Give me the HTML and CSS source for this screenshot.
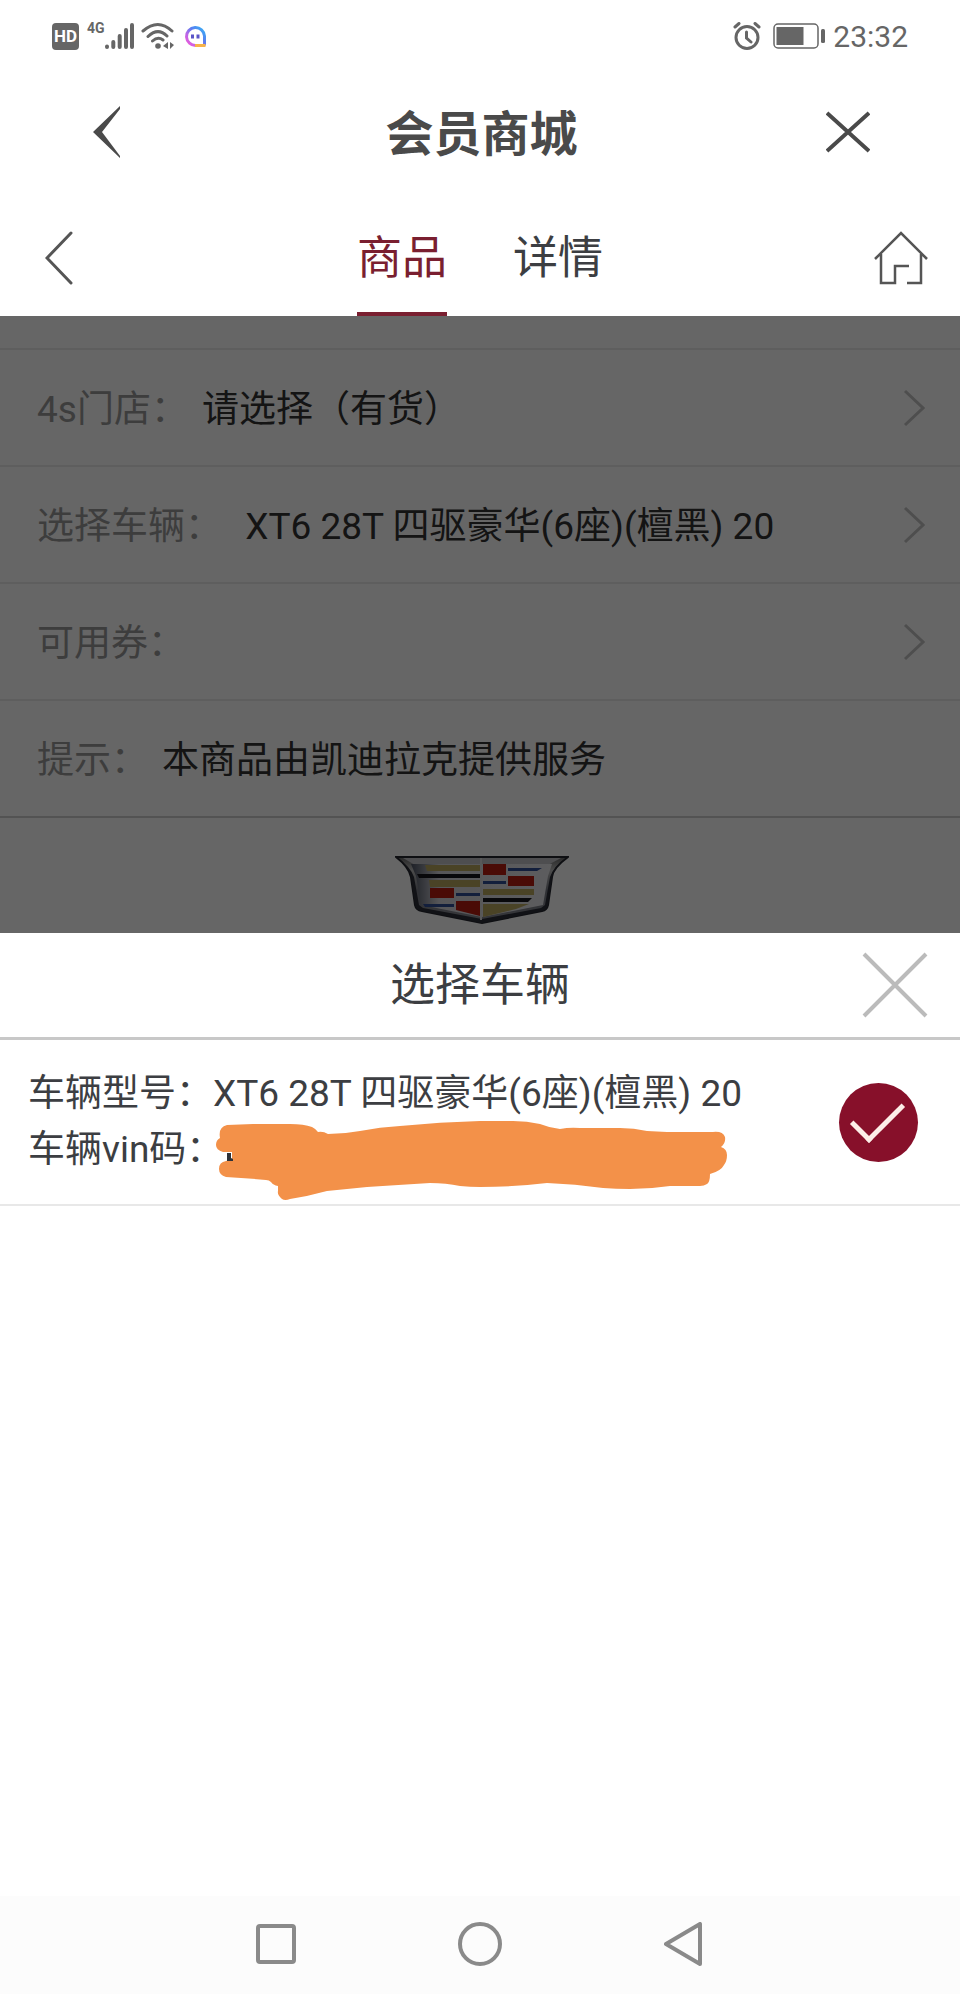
FILE: index.html
```html
<!DOCTYPE html>
<html lang="zh-CN">
<head>
  <meta charset="UTF-8">
  <meta name="viewport" content="width=device-width, initial-scale=1.0">
  <title>会员商城</title>
  <link rel="stylesheet" href="styles.css">
</head>
<body>
  <div class="status-bar">
    <div class="status-left">
      <span class="hd">HD</span>
      <span class="network">4G</span>
      <svg class="signal" width="30" height="28" viewBox="0 0 30 28" stroke="#666" stroke-width="4" stroke-linecap="round">
        <path d="M2 24.500v.5M8.300 20v5M14.700 14v11M21 8v17M27 3v22"/>
      </svg>
      <svg class="wifi" width="34" height="28" viewBox="0 0 34 28" fill="none" stroke="#666" stroke-width="3" stroke-linecap="round">
        <path d="M2 9Q17-4 31 9M7 14.500Q17 5 26 14M11.500 19Q17 14 22 18"/>
        <circle cx="17" cy="24" r="2.800" fill="#666" stroke="none"/>
        <path d="M27 20v7l-5-3zM29 20v7l4-4z" fill="#666" stroke="none"/>
      </svg>
      <svg class="chat" width="23" height="23" viewBox="0 0 23 23" fill="none">
        <defs>
          <linearGradient id="bubble" x1="0" y1="1" x2="1" y2="0">
            <stop offset="0" stop-color="#f457d8"/>
            <stop offset=".35" stop-color="#b667e8"/>
            <stop offset=".6" stop-color="#5b7cf0"/>
            <stop offset="1" stop-color="#35b4f5"/>
          </linearGradient>
        </defs>
        <path d="M12 20.500A9 9 0 1 1 20.500 11v9.500" stroke="url(#bubble)" stroke-width="3"/>
        <path d="M11 20.500h10.500" stroke="#f7b34a" stroke-width="3"/>
        <path d="M8.500 9.500v4M14 9.500v4" stroke="#5a55c8" stroke-width="3"/>
      </svg>
    </div>
    <div class="status-right">
      <svg width="28" height="28" viewBox="0 0 28 28" fill="none" stroke="#666" stroke-width="3" stroke-linecap="round">
        <circle cx="14" cy="15.500" r="11"/>
        <path d="M13.500 10v6l4.500 4M2 5l4-3.500M26 5l-4-3.500"/>
      </svg>
      <svg width="52" height="26" viewBox="0 0 52 26">
        <rect x="1" y="1" width="44" height="24" rx="4" fill="none" stroke="#666" stroke-width="1.500"/>
        <rect x="3.500" y="4" width="27" height="18" fill="#666"/>
        <rect x="48" y="6" width="4" height="14" rx="1.500" fill="#666"/>
      </svg>
      <span class="time">23:32</span>
    </div>
  </div>

  <header class="app-header">
    <button type="button" aria-label="返回">
      <svg width="28" height="52" viewBox="0 0 28 52" fill="#4a4a4a">
        <path d="M27 0v3L9 26l18 24v2L0 26z"/>
      </svg>
    </button>
    <h1>会员商城</h1>
    <button type="button" class="end" aria-label="关闭">
      <svg width="44" height="42" viewBox="0 0 44 42" stroke="#4a4a4a" stroke-width="4">
        <path d="M1 2l42 38M43 2L1 40"/>
      </svg>
    </button>
  </header>

  <nav class="tab-bar">
    <button type="button" class="back" aria-label="后退">
      <svg width="28" height="54" viewBox="0 0 28 54" fill="none" stroke="#555" stroke-width="3" stroke-linecap="round">
        <path d="M26 2L2 27l24 25"/>
      </svg>
    </button>
    <div class="tabs">
      <a href="#goods" class="active">商品</a>
      <a href="#detail">详情</a>
    </div>
    <button type="button" class="end" aria-label="首页">
      <svg width="54" height="54" viewBox="0 0 54 54" fill="none" stroke="#555" stroke-width="2.500">
        <path d="M1 28L27 2l26 26M7 23v29h14V35h14M47 23v29H33"/>
      </svg>
    </button>
  </nav>

  <main class="content">
    <div class="strip"></div>
    <button type="button" class="row">
      <span class="label">4s门店：</span>
      <span class="value">请选择（有货）</span>
      <svg class="arrow" width="22" height="38" viewBox="0 0 22 38"><path d="M2 2l18 17L2 36"/></svg>
    </button>
    <button type="button" class="row">
      <span class="label">选择车辆：</span>
      <span class="value">&nbsp;XT6 28T 四驱豪华(6座)(檀黑) 20</span>
      <svg class="arrow" width="22" height="38" viewBox="0 0 22 38"><path d="M2 2l18 17L2 36"/></svg>
    </button>
    <button type="button" class="row">
      <span class="label">可用券：</span>
      <svg class="arrow" width="22" height="38" viewBox="0 0 22 38"><path d="M2 2l18 17L2 36"/></svg>
    </button>
    <div class="row last">
      <span class="label">提示：</span>
      <span class="value">本商品由凯迪拉克提供服务</span>
    </div>
    <div class="brand">
      <svg width="174" height="68" viewBox="0 0 174 68">
        <defs>
          <linearGradient id="chrome" x1="0" y1="0" x2="0" y2="1">
            <stop offset="0" stop-color="#666"/>
            <stop offset=".2" stop-color="#bbb"/>
            <stop offset=".5" stop-color="#777a84"/>
            <stop offset="1" stop-color="#8a8c94"/>
          </linearGradient>
          <linearGradient id="fade" x1="0" x2="1">
            <stop offset="0" stop-color="#4c5262"/>
            <stop offset=".2" stop-color="#d8d8de"/>
            <stop offset="1" stop-color="#e8e8ec"/>
          </linearGradient>
        </defs>
        <path d="M1 1h172q-15 11-16 20l-4 28q-1 5-6 6L87 67 27 55q-6-1-7-6l-4-28Q14 11 1 1z" fill="url(#chrome)" stroke="#24262e" stroke-width="2"/>
        <path d="M1 1q14 9 18 20l5 28 4 3 59 11 59-11 4-3 5-28q4-11 18-20-14 10-16 20l-4 28q-1 5-6 6L87 67 27 55q-6-1-7-6l-4-28Q14 10 1 1z" fill="#2c2e38"/>
        <path d="M8 2h158l-13 7H20z" fill="#c2c2c8"/>
        <path d="M16 8h141l-4 12-5 29-61 12-61-12-5-29z" fill="url(#fade)"/>
        <path d="M30 9h55v6H32zM34 24h51v7H35zM88 33h51v6H88zM88 48h46l-13 5-33 8z" fill="#b8a860"/>
        <path d="M22 18h63v4H24zM88 42h49l-4 4H88z" fill="#16161c"/>
        <path d="M88 8h23v11H88zM113 20h26v10h-26zM35 32h24v10H35zM61 45h24v15l-24-6z" fill="#b81c10"/>
        <path d="M113 12h34l-5 3h-29zM88 25h23v3H88zM61 37h24v3H61zM28 48h31v3H30z" fill="#304f96"/>
        <path d="M86 2v62" stroke="#ddd" stroke-width="2"/>
      </svg>
    </div>
  </main>

  <section class="sheet">
    <div class="sheet-header">
      <h2>选择车辆</h2>
      <button type="button" class="end" aria-label="关闭选择车辆">
        <svg width="66" height="66" viewBox="0 0 66 66" stroke="#bbb" stroke-width="4">
          <path d="M2 2l62 62M64 2L2 64"/>
        </svg>
      </button>
    </div>
    <div class="car">
      <label for="car1" class="car-info">
        <span>车辆型号：XT6 28T 四驱豪华(6座)(檀黑) 20</span>
        <span class="vin">车辆vin码：
          <svg class="redact" width="514" height="80" viewBox="0 0 514 80">
            <path d="M4 16Q2 5 11 3L37 2h37q14 0 22 3 4 2 6 5 5-1 10 2 16 0 32-3 20-4 40-5 40-4 80-5h33q14 0 27 3 10 4 20 5 10-2 20-1h40q14 0 27 3l20 1h46q10-1 12 5 1 6-4 10 6 2 6 8 0 6-3 10-3 6-14 9 0 8-3 10-3 2-7 2h-30q-20 3-40 3-14 0-27-1-28-4-56-5-34 4-67 4-10 0-20-1-14-3-30-3-32 2-63 4-20 2-40 4-18 5-37 8-5 2-8 0-5-4-4-8v-5q-5-1-7-4-2-2-5-2-20-2-40-3-7-2-7-8 0-7 7-8l6-2v-7H7Q0 28 0 23q0-5 4-7z" fill="#f39149"/>
            <path d="M11 31h4v5l2 1v2h-6z" fill="#2e3238"/>
          </svg>
        </span>
      </label>
      <input type="radio" id="car1" name="car" checked>
    </div>
  </section>

  <footer class="system-nav">
    <button type="button" aria-label="最近任务">
      <svg width="40" height="44" viewBox="0 0 40 44"><rect x="2" y="4" width="36" height="36" rx="2"/></svg>
    </button>
    <button type="button" aria-label="主屏幕">
      <svg width="44" height="44" viewBox="0 0 44 44"><circle cx="22" cy="22" r="20"/></svg>
    </button>
    <button type="button" aria-label="系统返回">
      <svg width="38" height="44" viewBox="0 0 38 44"><path d="M36 2v40L2 22z"/></svg>
    </button>
  </footer>
</body>
</html>
```

FILE: styles.css
```css
* {
  box-sizing: border-box;
}
body {
  margin: 0;
  min-height: 100vh;
  display: flex;
  flex-direction: column;
  background: #fff;
  color: #3c3e42;
  font-family: Roboto, "Noto Sans CJK SC", sans-serif;
  font-size: 37px;
}
button {
  padding: 0;
  border: none;
  background: none;
  color: inherit;
  font: inherit;
  cursor: pointer;
}
svg {
  display: block;
  flex-shrink: 0;
}
h1, h2 {
  margin: 0;
}
.end {
  justify-self: end;
}

/* status bar */
.status-bar {
  display: flex;
  justify-content: space-between;
  height: 72px;
  padding: 0 52px;
  color: #666;
}
.status-left, .status-right {
  display: flex;
  align-items: center;
}
.hd {
  width: 27px;
  height: 27px;
  border-radius: 4px;
  background: #666;
  color: #fff;
  font-size: 17px;
  font-weight: 700;
  line-height: 27px;
  text-align: center;
}
.network {
  align-self: flex-start;
  margin-top: 20px;
  margin-left: 8px;
  font-size: 14px;
  font-weight: 700;
  line-height: 16px;
}
.wifi {
  margin-left: 6px;
}
.chat {
  margin-left: 9px;
}
.status-right {
  gap: 12px;
}
.time {
  margin-left: -4px;
  font-size: 30px;
}

/* app header */
.app-header {
  display: grid;
  grid-template-columns: 1fr auto 1fr;
  align-items: center;
  height: 120px;
  padding: 0 90px 0 93px;
}
.app-header button, .tab-bar button {
  width: fit-content;
}
.app-header h1 {
  padding-top: 6px;
  font-size: 48px;
  line-height: 64px;
  color: #4a4a4a;
}

/* tabs */
.tab-bar {
  display: grid;
  grid-template-columns: 1fr auto 1fr;
  align-items: center;
  height: 124px;
  padding: 8px 32px 0;
}
.tab-bar .back {
  margin-left: 13px;
}
.tabs {
  display: flex;
  gap: 66px;
}
.tabs a {
  padding-top: 6px;
  color: #3c3e42;
  font-size: 45px;
  line-height: 106px;
  text-decoration: none;
  border-bottom: 4px solid transparent;
}
.tabs .active {
  color: #7a1f30;
  border-color: #7a1f30;
}

/* dimmed page content */
.content {
  position: relative;
}
.content::after {
  content: "";
  position: absolute;
  inset: 0;
  background: rgba(0, 0, 0, 0.6);
}
.strip {
  height: 34px;
  border-bottom: 2px solid #ebebeb;
}
.row {
  display: flex;
  align-items: center;
  gap: 14px;
  width: 100%;
  height: 117px;
  padding: 0 35px 0 37px;
  border-bottom: 2px solid #ebebeb;
  text-align: left;
}
.row.last {
  border-color: #d0d0d0;
}
.label, .value {
  padding-bottom: 4px;
}
.label {
  color: #999;
}
.value {
  color: #333;
}
.arrow {
  margin-left: auto;
  fill: none;
  stroke: #c4c4c4;
  stroke-width: 3;
}
.brand {
  display: flex;
  justify-content: center;
  padding: 38px 0 9px 4px;
}

/* bottom sheet */
.sheet {
  flex: 1;
}
.sheet-header {
  display: grid;
  grid-template-columns: 1fr auto 1fr;
  align-items: center;
  height: 107px;
  padding: 0 32px;
  border-bottom: 3px solid #c8c8c8;
}
.sheet-header h2 {
  grid-column: 2;
  padding-top: 2px;
  font-size: 45px;
  font-weight: 400;
  line-height: 64px;
}
.car {
  display: flex;
  align-items: center;
  justify-content: space-between;
  padding: 26px 42px 26px 28px;
  border-bottom: 2px solid #e8e8e8;
}
.car-info {
  line-height: 56px;
}
.car-info span {
  display: block;
}
.vin {
  position: relative;
}
.redact {
  position: absolute;
  top: 0;
  left: 188px;
  overflow: visible;
}
.car input {
  appearance: none;
  display: grid;
  place-items: center;
  width: 79px;
  height: 79px;
  margin: 0;
  border-radius: 50%;
  background: #87102a;
}
.car input:checked::before {
  content: "";
  width: 46px;
  height: 22px;
  margin: 0 2px 14px 0;
  border-left: 5px solid #fdeee8;
  border-bottom: 5px solid #fdeee8;
  transform: rotate(-45deg);
}

/* system navigation */
.system-nav {
  display: flex;
  align-items: center;
  justify-content: center;
  gap: 162px;
  height: 98px;
  padding: 0 2px 2px 0;
  background: #fcfcfc;
}
.system-nav svg {
  fill: none;
  stroke: #8a8a8a;
  stroke-width: 4;
  stroke-linejoin: round;
}
```
